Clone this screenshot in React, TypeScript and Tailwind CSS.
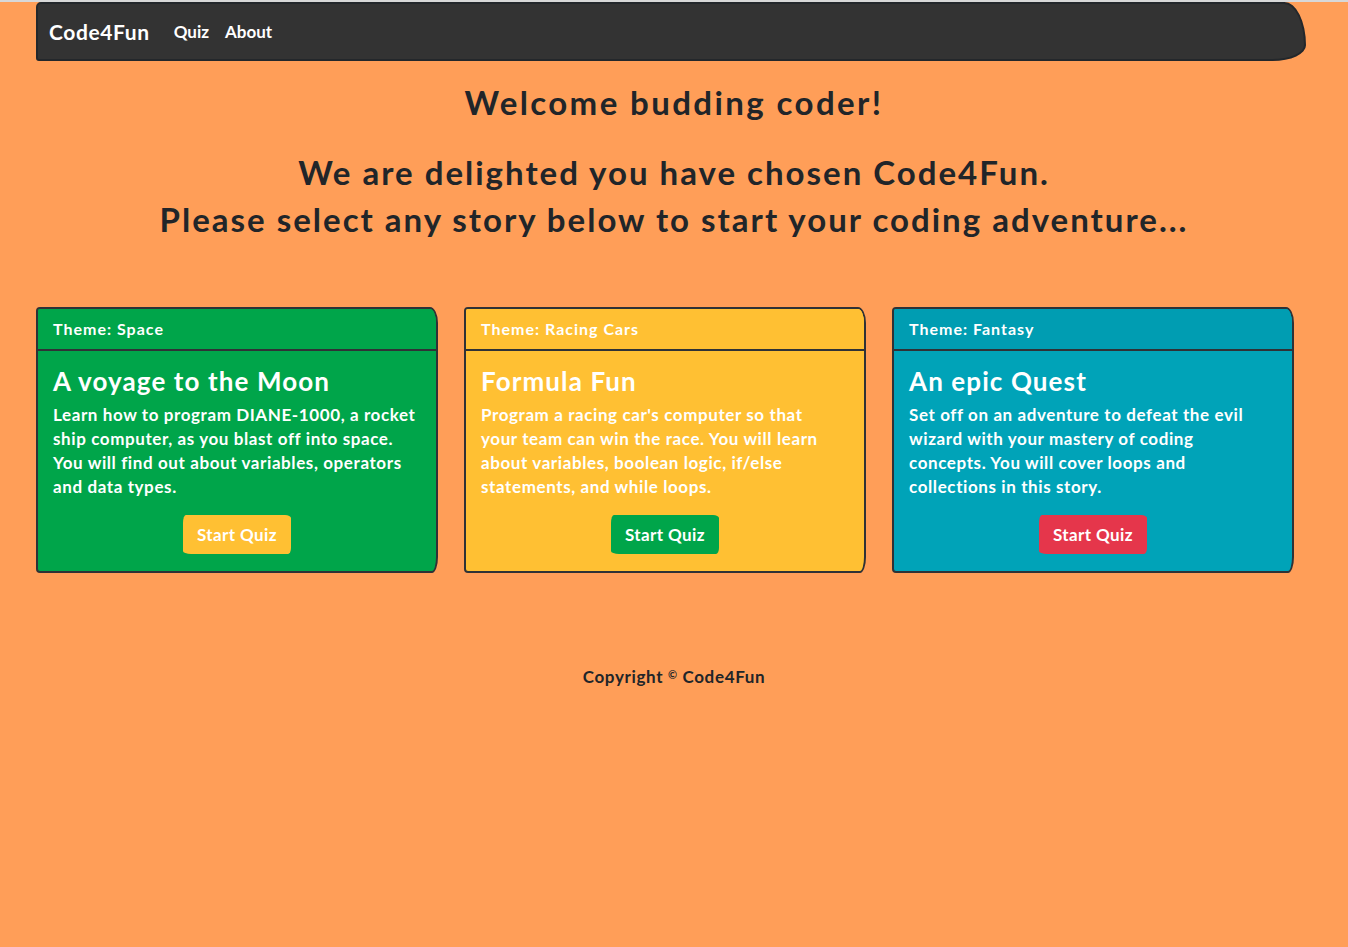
import React from "react";

const font = { fontFamily: "Lato, 'Open Sans', sans-serif" };

const stories = [
  {
    theme: "Space",
    title: "A voyage to the Moon",
    lines: [
      "Learn how to program DIANE-1000, a rocket",
      "ship computer, as you blast off into space.",
      "You will find out about variables, operators",
      "and data types.",
    ],
    card: "bg-[#00a54a]",
    head: "bg-[#00a54a]",
    btn: "bg-[#ffc033]",
  },
  {
    theme: "Racing Cars",
    title: "Formula Fun",
    lines: [
      "Program a racing car's computer so that",
      "your team can win the race. You will learn",
      "about variables, boolean logic, if/else",
      "statements, and while loops.",
    ],
    card: "bg-[#ffc033]",
    head: "bg-[#ffc033]",
    btn: "bg-[#00a54a]",
  },
  {
    theme: "Fantasy",
    title: "An epic Quest",
    lines: [
      "Set off on an adventure to defeat the evil",
      "wizard with your mastery of coding",
      "concepts. You will cover loops and",
      "collections in this story.",
    ],
    card: "bg-[#00a3b8]",
    head: "bg-[#009db2]",
    btn: "bg-[#e5364b]",
  },
];

export default function App() {
  return (
    <div className="min-h-[947px] bg-[#ff9e58] border-t-2 border-[#d8d8d8] text-[#212529]" style={font}>
      <nav className="mx-[36px] w-[1270px] h-[59px] bg-[#333333] border-2 border-[#23272b] rounded-[5px_22px_34px_3px/5px_44px_16px_3px] flex items-center px-[11px] gap-[24px]">
        <span className="text-white text-[21px] font-bold tracking-[0.6px]">Code4Fun</span>
        <div className="flex gap-[16px] text-white text-[17px] font-bold">
          <span>Quiz</span>
          <span>About</span>
        </div>
      </nav>

      <div className="text-center mt-[19px] tracking-[2px]">
        <h1 className="text-[33px] font-bold leading-[44px] tracking-[2.4px]">Welcome budding coder!</h1>
        <h2 className="text-[33px] font-bold leading-[47px] mt-[25px]">
          We are delighted you have chosen Code4Fun.
          <br />
          Please select any story below to start your coding adventure...
        </h2>
      </div>

      <div className="flex gap-[26px] ml-[36px] mt-[64px]">
        {stories.map((s) => (
          <div
            key={s.theme}
            className={`w-[402px] h-[266px] ${s.card} border-2 border-[#2f3236] rounded-[4px_8px_6px_4px/4px_16px_16px_4px] overflow-hidden flex flex-col text-white`}
          >
            <div className={`${s.head} h-[42px] border-b-2 border-[#2f3236] px-[15px] flex items-center text-[16px] font-bold tracking-[1px]`}>
              Theme: {s.theme}
            </div>
            <div className="px-[15px] pt-[14px] flex flex-col">
              <h3 className="text-[26px] font-bold leading-[32px] tracking-[1.1px]">{s.title}</h3>
              <p className="text-[17px] font-bold leading-[24px] mt-[6px] tracking-[0.6px]">
                {s.lines.map((l) => (
                  <span key={l} className="block whitespace-nowrap">
                    {l}
                  </span>
                ))}
              </p>
              <div className="flex justify-center mt-[16px]">
                <button
                  className={`${s.btn} text-white text-[17px] font-bold tracking-[0.4px] w-[108px] h-[39px] rounded-[3px_6px_3px_8px/8px_3px_6px_3px]`}
                >
                  Start Quiz
                </button>
              </div>
            </div>
          </div>
        ))}
      </div>

      <footer className="text-center mt-[91px] text-[17px] font-bold tracking-[0.65px]">
        Copyright <span className="text-[11px] align-[4px]">©</span> Code4Fun
      </footer>
    </div>
  );
}
